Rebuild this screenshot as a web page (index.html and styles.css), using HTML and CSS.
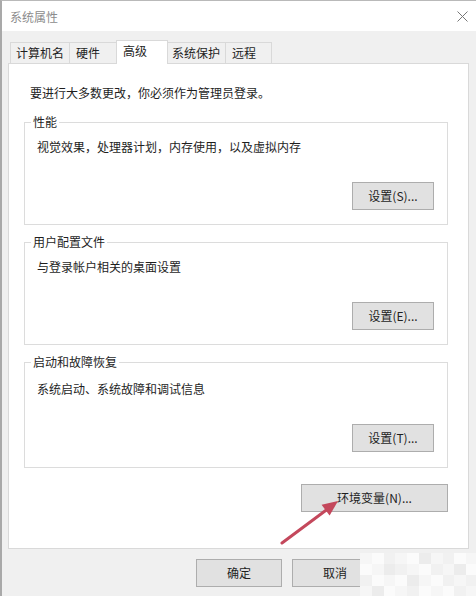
FILE: index.html
```html
<!DOCTYPE html>
<html lang="zh-CN">
<head>
<meta charset="utf-8">
<title>系统属性</title>
<link rel="stylesheet" href="styles.css">
</head>
<body>
<div class="window">
  <header class="titlebar">
    <span class="title">系统属性</span>
    <svg class="close" viewBox="0 0 11 11"><path d="M0.5 0.5 L10.5 10.5 M10.5 0.5 L0.5 10.5" /></svg>
  </header>
  <nav class="tabs">
    <div class="tab t1">计算机名</div>
    <div class="tab t2">硬件</div>
    <div class="tab t3 active">高级</div>
    <div class="tab t4">系统保护</div>
    <div class="tab t5">远程</div>
  </nav>
  <main class="panel">
    <p class="note">要进行大多数更改，你必须作为管理员登录。</p>
    <fieldset class="group">
      <legend>性能</legend>
      <div class="group-body">
        <p class="desc">视觉效果，处理器计划，内存使用，以及虚拟内存</p>
        <button class="btn btn-set">设置(S)...</button>
      </div>
    </fieldset>
    <fieldset class="group">
      <legend>用户配置文件</legend>
      <div class="group-body">
        <p class="desc">与登录帐户相关的桌面设置</p>
        <button class="btn btn-set">设置(E)...</button>
      </div>
    </fieldset>
    <fieldset class="group g3">
      <legend>启动和故障恢复</legend>
      <div class="group-body">
        <p class="desc">系统启动、系统故障和调试信息</p>
        <button class="btn btn-set">设置(T)...</button>
      </div>
    </fieldset>
    <div class="env-row">
      <button class="btn btn-env">环境变量(N)...</button>
    </div>
  </main>
  <footer class="actions">
    <button class="btn btn-dlg">确定</button>
    <button class="btn btn-dlg">取消</button>
  </footer>
  <svg class="arrow" viewBox="0 0 476 596">
    <line x1="282" y1="543" x2="327" y2="509.5" />
    <polygon points="338,501 329.6,515.6 321.6,504.8" />
  </svg>
  <div class="mosaic">
    <i class="a"></i><i class="b"></i><i class="c"></i><i class="a"></i><i class="b"></i><i class="d"></i><i class="a"></i><i class="c"></i><i class="b"></i><i class="a"></i>
    <i class="b"></i><i class="a"></i><i class="d"></i><i class="c"></i><i class="a"></i><i class="b"></i><i class="c"></i><i class="a"></i><i class="d"></i><i class="b"></i>
    <i class="c"></i><i class="b"></i><i class="a"></i><i class="b"></i><i class="d"></i><i class="a"></i><i class="b"></i><i class="c"></i><i class="a"></i><i class="c"></i>
    <i class="a"></i><i class="d"></i><i class="b"></i><i class="a"></i><i class="c"></i><i class="b"></i><i class="a"></i><i class="b"></i><i class="c"></i><i class="a"></i>
  </div>
</div>
</body>
</html>
```
FILE: styles.css
```css
* { box-sizing: border-box; }

body {
  margin: 0;
  background: #f0f0f0;
  font-family: "Noto Sans CJK SC", "Microsoft YaHei", sans-serif;
  font-size: 12px;
  color: #1e1e1e;
}

.window {
  position: relative;
  width: 476px;
  height: 596px;
  overflow: hidden;
  border-top: 1px solid #b9b9b9;
  border-left: 2px solid #a9a9a9;
  background: #f0f0f0;
}

.titlebar {
  height: 30px;
  background: #fff;
  display: flex;
  align-items: center;
  justify-content: space-between;
  padding: 2px 8px 0 8px;
}

.title {
  color: #8c8c8c;
  line-height: 16px;
}

.close {
  width: 11px;
  height: 11px;
  margin-top: -2px;
}
.close path {
  stroke: #777;
  stroke-width: 1;
  fill: none;
}

.tabs {
  display: flex;
  align-items: flex-end;
  height: 23px;
  margin: 9px 0 0 8px;
}

.tab {
  height: 21px;
  border: 1px solid #d9d9d9;
  border-bottom: none;
  background: #f0f0f0;
  line-height: 20px;
  padding-left: 5px;
  margin-right: -1px;
  white-space: nowrap;
}
.t1 { width: 60px; }
.t2 { width: 48px; padding-left: 6px; }
.t3 { width: 52px; padding-left: 6px; }
.t4 { width: 59px; padding-left: 4px; }
.t5 { width: 47px; padding-left: 6px; }

.tab.active {
  height: 24px;
  background: #fff;
  margin-bottom: -1px;
  position: relative;
  z-index: 1;
  line-height: 19px;
}

.panel {
  display: block;
  margin-left: 6px;
  width: 461px;
  height: 486px;
  border: 1px solid #d9d9d9;
  background: #fff;
  padding: 21px 20px 0 15px;
}

.note {
  margin: 0 0 0 6px;
  line-height: 16px;
}

.group {
  margin: 13px 0 0 0;
  padding: 0;
  min-width: 0;
  border: 1px solid #dcdcdc;
}
.group + .group {
  margin-top: 9px;
}
.group legend {
  padding: 0 2px;
  margin-left: 6px;
  line-height: 16px;
}

.group-body {
  display: flex;
  flex-direction: column;
  padding: 9px 13px 14px 12px;
}
.g3 .group-body {
  padding-top: 11px;
  padding-bottom: 15px;
}

.desc {
  margin: 0;
  line-height: 16px;
}

.btn {
  font: inherit;
  color: #1e1e1e;
  background: #e1e1e1;
  border: 1px solid #adadad;
  border-radius: 0;
  padding: 0;
  height: 28px;
  line-height: 26px;
  text-align: center;
}

.btn-set {
  align-self: flex-end;
  margin-top: 27px;
  width: 82px;
}

.env-row {
  display: flex;
  justify-content: flex-end;
  margin-top: 16px;
}

.btn-env {
  width: 147px;
}

.actions {
  display: flex;
  gap: 10px;
  padding-left: 194px;
  margin-top: 10px;
}

.btn-dlg {
  width: 86px;
}

.arrow {
  position: absolute;
  left: -2px;
  top: -1px;
  width: 476px;
  height: 596px;
  pointer-events: none;
}
.arrow line {
  stroke: #c4485c;
  stroke-width: 3;
  stroke-linecap: round;
}
.arrow polygon {
  fill: #c4485c;
}

.mosaic {
  position: absolute;
  left: 358px;
  top: 552px;
  width: 118px;
  height: 44px;
  display: grid;
  grid-template-columns: repeat(10, 1fr);
  grid-template-rows: repeat(4, 1fr);
}
.mosaic i { display: block; }
.mosaic .a { background: #f6f6f6; }
.mosaic .b { background: #fbfbfb; }
.mosaic .c { background: #f1f1f1; }
.mosaic .d { background: #ececec; }
```
